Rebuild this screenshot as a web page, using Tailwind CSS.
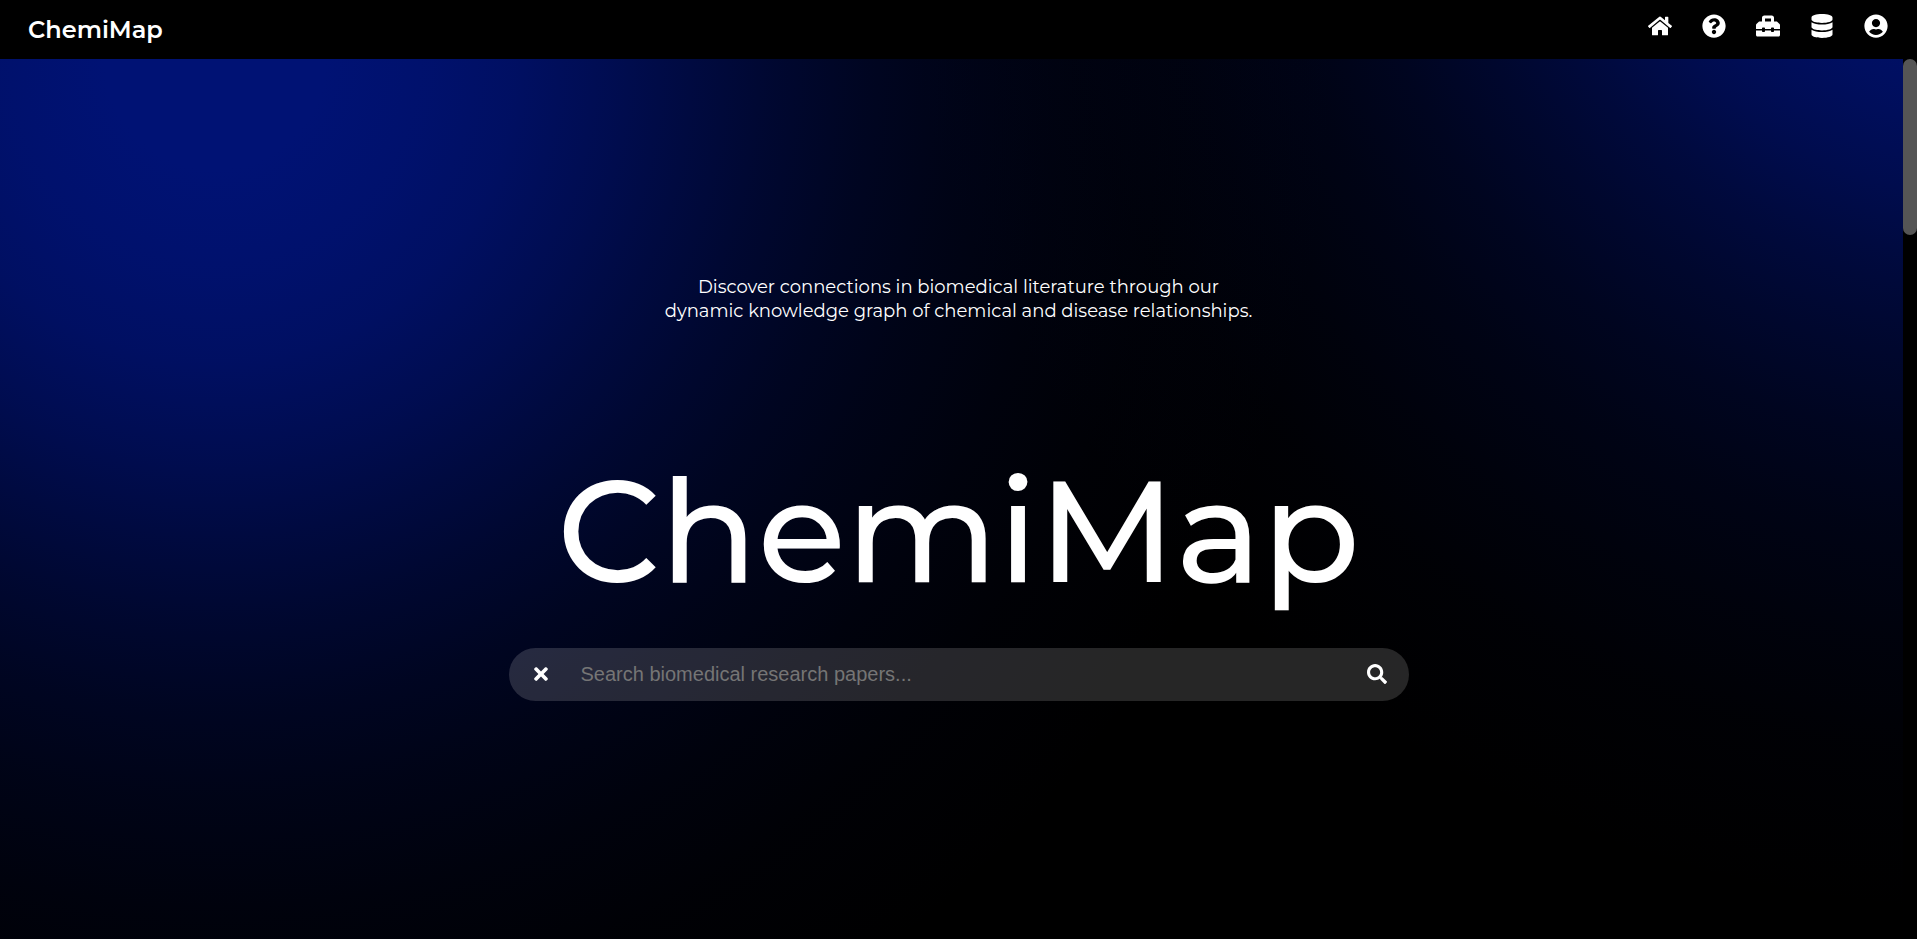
<!DOCTYPE html>
<html lang="en">
<head>
<meta charset="utf-8">
<title>ChemiMap</title>
<script src="https://cdn.jsdelivr.net/npm/@tailwindcss/browser@4"></script>
</head>
<body class="flex h-screen flex-col overflow-hidden bg-black font-['Montserrat','Inter',sans-serif] text-white">
<header class="flex h-[59px] shrink-0 items-center justify-between pr-[29px] pl-7">
  <a href="#" class="text-2xl font-semibold">ChemiMap</a>
  <nav class="flex gap-[30px] pb-[7px]">
    <a href="#" aria-label="Home" class="block size-6"><svg viewBox="0 0 576 512" class="size-6" fill="currentColor"><path d="M280.37 148.26L96 300.11V464a16 16 0 0 0 16 16l112.060-.29a16 16 0 0 0 15.920-16V368a16 16 0 0 1 16-16h64a16 16 0 0 1 16 16v95.640a16 16 0 0 0 16 16.050L464 480a16 16 0 0 0 16-16V300L295.670 148.260a12.190 12.190 0 0 0-15.300 0zM571.600 251.470L488 182.560V44.050a12 12 0 0 0-12-12h-56a12 12 0 0 0-12 12v72.610L318.470 43a48 48 0 0 0-61 0L4.340 251.470a12 12 0 0 0-1.600 16.900l25.500 31A12 12 0 0 0 45.150 301l235.220-193.740a12.190 12.190 0 0 1 15.300 0L530.900 301a12 12 0 0 0 16.900-1.600l25.500-31a12 12 0 0 0-1.700-16.930z"/></svg></a>
    <a href="#" aria-label="Help" class="block size-6"><svg viewBox="0 0 512 512" class="size-6" fill="currentColor"><path d="M504 256c0 136.997-111.043 248-248 248S8 392.997 8 256C8 119.083 119.043 8 256 8s248 111.083 248 248zM262.655 90c-54.497 0-89.255 22.957-116.549 63.758-3.536 5.286-2.353 12.415 2.715 16.258l34.699 26.310c5.205 3.947 12.621 3.008 16.665-2.122 17.864-22.658 30.113-35.797 57.303-35.797 20.429 0 45.698 13.148 45.698 32.958 0 14.976-12.363 22.667-32.534 33.976C247.128 238.528 216 254.941 216 296v4c0 6.627 5.373 12 12 12h56c6.627 0 12-5.373 12-12v-1.333c0-28.462 83.186-29.647 83.186-106.667 0-58.002-60.165-102-116.531-102zM256 338c-25.365 0-46 20.635-46 46 0 25.364 20.635 46 46 46s46-20.636 46-46c0-25.365-20.635-46-46-46z"/></svg></a>
    <a href="#" aria-label="Toolbox" class="block size-6"><svg viewBox="0 0 512 512" class="size-6" fill="currentColor"><path d="M502.630 214.630l-45.250-45.250c-6-6-14.140-9.370-22.630-9.370H384V80c0-26.510-21.490-48-48-48H176c-26.510 0-48 21.490-48 48v80H77.250c-8.490 0-16.620 3.370-22.630 9.370L9.370 214.630c-6 6-9.370 14.140-9.370 22.630V320h128v-16c0-8.840 7.160-16 16-16h32c8.840 0 16 7.160 16 16v16h128v-16c0-8.840 7.160-16 16-16h32c8.840 0 16 7.160 16 16v16h128v-82.750c0-8.480-3.370-16.620-9.370-22.620zM320 160H192V96h128v64zm64 208c0 8.840-7.160 16-16 16h-32c-8.840 0-16-7.160-16-16v-16H192v16c0 8.840-7.160 16-16 16h-32c-8.840 0-16-7.160-16-16v-16H0v96c0 17.670 14.330 32 32 32h448c17.670 0 32-14.330 32-32v-96H384v16z"/></svg></a>
    <a href="#" aria-label="Database" class="block size-6"><svg viewBox="0 0 448 512" class="size-6" fill="currentColor"><path d="M448 73.143v45.714C448 159.143 347.667 192 224 192S0 159.143 0 118.857V73.143C0 32.857 100.333 0 224 0s224 32.857 224 73.143zM448 176v102.857C448 319.143 347.667 352 224 352S0 319.143 0 278.857V176c48.125 33.143 136.208 48.572 224 48.572S399.874 209.143 448 176zm0 160v102.857C448 479.143 347.667 512 224 512S0 479.143 0 438.857V336c48.125 33.143 136.208 48.572 224 48.572S399.874 369.143 448 336z"/></svg></a>
    <a href="#" aria-label="Account" class="block size-6"><svg viewBox="0 0 496 512" class="size-6" fill="currentColor"><path d="M248 8C111 8 0 119 0 256s111 248 248 248 248-111 248-248S385 8 248 8zm0 96c48.600 0 88 39.400 88 88s-39.400 88-88 88-88-39.400-88-88 39.400-88 88-88zm0 344c-58.700 0-111.300-26.600-146.500-68.200 18.800-35.400 55.600-59.800 98.500-59.800 2.400 0 4.800.4 7.100 1.100 13 4.200 26.600 6.900 40.900 6.900 14.300 0 28-2.700 40.900-6.900 2.300-.7 4.700-1.100 7.100-1.100 42.900 0 79.700 24.400 98.500 59.800C359.300 421.400 306.700 448 248 448z"/></svg></a>
  </nav>
</header>
<div class="relative flex min-h-0 flex-1">
  <main class="flex flex-1 flex-col items-center bg-[radial-gradient(circle_at_215px_0px,#001274_0px,#001274_110px,#001274ee_215px,#001274d8_300px,#001274b0_400px,#0012748c_480px,#0012746a_560px,#0012744a_650px,#00127432_740px,#0012741c_850px,#0012740c_960px,#00127400_1120px),radial-gradient(circle_at_104%_-30%,#001274_0px,#001274_110px,#001274ee_215px,#001274d4_300px,#001274ac_400px,#00127486_480px,#00127466_560px,#00127446_650px,#0012742e_740px,#0012741a_850px,#0012740a_960px,#00127400_1120px)] pt-[216px]">
    <p class="text-center text-lg leading-6">Discover connections in biomedical literature through our<br>dynamic knowledge graph of chemical and disease relationships.</p>
    <h1 class="mt-[120px] text-[144px] leading-[176px] font-medium">ChemiMap</h1>
    <form class="mt-[29px] flex h-[53px] w-[900px] max-w-full items-center rounded-full bg-[#ffffff26] pr-[22px] pb-[2px] pl-[22px]">
      <button type="button" aria-label="Clear" class="flex size-5 items-center justify-center"><svg viewBox="0 0 352 512" class="h-5 w-[14px]" fill="currentColor"><path d="M242.720 256l100.070-100.070c12.280-12.280 12.280-32.190 0-44.480l-22.240-22.240c-12.280-12.280-32.190-12.280-44.480 0L176 189.280 75.930 89.210c-12.280-12.280-32.190-12.280-44.480 0L9.210 111.450c-12.280 12.280-12.280 32.190 0 44.480L109.280 256 9.210 356.070c-12.280 12.280-12.280 32.190 0 44.480l22.240 22.240c12.280 12.280 32.200 12.280 44.480 0L176 322.720l100.070 100.070c12.280 12.280 32.200 12.280 44.480 0l22.240-22.240c12.280-12.280 12.280-32.190 0-44.480L242.720 256z"/></svg></button>
      <input type="text" aria-label="Search" placeholder="Search biomedical research papers..." class="ml-[30px] min-w-0 flex-1 bg-transparent font-['Liberation_Sans',sans-serif] text-xl outline-none placeholder:text-[#757575]">
      <button type="submit" aria-label="Search" class="size-5"><svg viewBox="0 0 512 512" class="size-5" fill="currentColor"><path d="M505 442.700L405.300 343c-4.500-4.500-10.600-7-17-7H372c27.600-35.300 44-79.700 44-128C416 93.100 322.900 0 208 0S0 93.100 0 208s93.100 208 208 208c48.300 0 92.700-16.400 128-44v16.300c0 6.400 2.500 12.500 7 17l99.700 99.700c9.400 9.400 24.600 9.400 33.900 0l28.300-28.300c9.400-9.400 9.400-24.600.1-34zM208 336c-70.700 0-128-57.200-128-128 0-70.700 57.200-128 128-128 70.700 0 128 57.200 128 128 0 70.700-57.200 128-128 128z"/></svg></button>
    </form>
  </main>
  <div class="absolute inset-y-0 right-0 w-[14px] bg-black"><div class="h-1/5 rounded-full bg-[#555555]"></div></div>
</div>
</body>
</html>
